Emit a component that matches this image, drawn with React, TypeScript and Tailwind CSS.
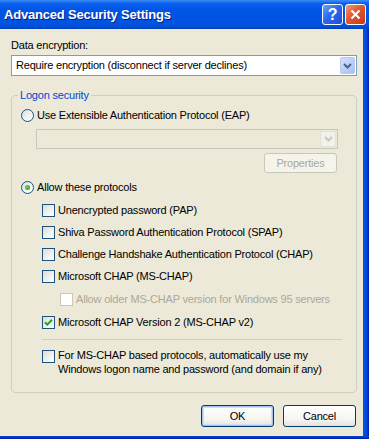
import React from 'react';

const CheckBox: React.FC<{ checked?: boolean; disabled?: boolean; className?: string }> = ({ checked = false, disabled = false, className = '' }) => (
  <span
    className={`w-[13px] h-[13px] shrink-0 border flex items-center justify-center ${
      disabled ? 'border-[#CAC8BB] bg-white' : 'border-[#1C5180] bg-[linear-gradient(135deg,#DCDCD7_0%,#F2F2EF_60%,#FFFFFF_100%)]'
    } ${className}`}
  >
    {checked && (
      <svg width="9" height="9" viewBox="0 0 9 9">
        <path d="M1 4.2 L3.3 6.6 L8 1.8" stroke="#21A121" strokeWidth="2" fill="none" />
      </svg>
    )}
  </span>
);

const Radio: React.FC<{ checked?: boolean }> = ({ checked = false }) => (
  <span className="w-[13px] h-[13px] shrink-0 rounded-full border border-[#1C5180] bg-[linear-gradient(135deg,#DCDCD7_0%,#F4F4F1_60%,#FFFFFF_100%)] flex items-center justify-center">
    {checked && <span className="w-[5px] h-[5px] rounded-full bg-[radial-gradient(circle_at_40%_40%,#63D563,#1E9A1E)]" />}
  </span>
);

const Chevron: React.FC<{ color: string }> = ({ color }) => (
  <svg width="9" height="6" viewBox="0 0 9 6">
    <path d="M1 1 L4.5 4.5 L8 1" stroke={color} strokeWidth="2" fill="none" />
  </svg>
);

const CheckRow: React.FC<{ label: string; checked?: boolean; className?: string }> = ({ label, checked, className = '' }) => (
  <div className={`flex items-center h-[13px] ml-[21px] gap-[3px] ${className}`}>
    <CheckBox checked={checked} />
    <span className="whitespace-nowrap">{label}</span>
  </div>
);

export default function App() {
  return (
    <div className="w-[369px] h-[439px] flex flex-col overflow-hidden bg-[#0054E3] font-['Liberation_Sans',Arial,sans-serif] text-[11px] leading-[13px] tracking-[-0.2px] text-black">
      {/* Title bar */}
      <div className="h-[29px] shrink-0 flex items-center pl-[4px] pr-[3px] bg-[linear-gradient(to_bottom,#3D8EF8_0%,#0A5FEE_12%,#0055E5_35%,#0054E3_70%,#0052DC_90%,#003FB8_100%)]">
        <span className="flex-1 text-white font-bold text-[13px] tracking-[-0.2px] [text-shadow:1px_1px_0_#0A1E80]">
          Advanced Security Settings
        </span>
        <div className="w-[21px] h-[21px] rounded-[3px] border border-white bg-[linear-gradient(135deg,#6FA2FF_0%,#2A68F0_45%,#1A4FD8_100%)] flex items-center justify-center text-white font-bold text-[16px] leading-none">
          ?
        </div>
        <div className="w-[21px] h-[21px] ml-[2px] rounded-[3px] border border-white bg-[linear-gradient(135deg,#F29A7C_0%,#E0572F_45%,#C63A16_100%)] flex items-center justify-center">
          <svg width="11" height="11" viewBox="0 0 11 11">
            <path d="M1.5 1.5 L9.5 9.5 M9.5 1.5 L1.5 9.5" stroke="white" strokeWidth="2" />
          </svg>
        </div>
      </div>

      <div className="flex-1 flex min-h-0">
        <div className="flex-1 bg-[#ECE9D8] pl-[11px] pr-[6px] pt-[10px]">
          <div>Data encryption:</div>
          <div className="mt-[3px] h-[21px] border border-[#7F9DB9] bg-white flex items-center pl-[4px] pr-px">
            <span className="flex-1 whitespace-nowrap">Require encryption (disconnect if server declines)</span>
            <div className="w-[15px] h-[17px] rounded-[2px] border border-[#B5C8F0] bg-[linear-gradient(135deg,#D4E0FC_0%,#BACDF8_60%,#A9BEF2_100%)] flex items-center justify-center">
              <Chevron color="#4D6185" />
            </div>
          </div>

          <fieldset className="mt-[13px] border border-[#D0D0BF] rounded-[4px] pl-[6px] pr-[6px] pt-[7px] pb-[16px]">
            <legend className="px-[2px] text-[#0046D5]">Logon security</legend>
            <div className="pl-[3px]">
              <div className="flex items-center h-[13px] gap-[3px]">
                <Radio />
                <span className="whitespace-nowrap">Use Extensible Authentication Protocol (EAP)</span>
              </div>

              <div className="mt-[7px] ml-[15px] w-[302px] h-[20px] border border-[#C9C7BA] bg-[#ECE9D8] flex items-center justify-end pr-px">
                <div className="w-[16px] h-[16px] rounded-[2px] border border-[#E3E1D6] bg-[#F2F1EA] flex items-center justify-center">
                  <Chevron color="#C9C7BA" />
                </div>
              </div>

              <div className="mt-[4px] ml-[243px] w-[73px] h-[20px] rounded-[3px] border border-[#C9C7BA] bg-[#F5F4EA] flex items-center justify-center text-[#ACA899]">
                Properties
              </div>

              <div className="mt-[8px] flex items-center h-[13px] gap-[3px]">
                <Radio checked />
                <span className="whitespace-nowrap">Allow these protocols</span>
              </div>

              <CheckRow className="mt-[10px]" label="Unencrypted password (PAP)" />
              <CheckRow className="mt-[9px]" label="Shiva Password Authentication Protocol (SPAP)" />
              <CheckRow className="mt-[9px]" label="Challenge Handshake Authentication Protocol (CHAP)" />
              <CheckRow className="mt-[9px]" label="Microsoft CHAP (MS-CHAP)" />

              <div className="mt-[10px] ml-[39px] flex items-center h-[13px] gap-[3px] text-[#ACA899]">
                <CheckBox disabled />
                <span className="whitespace-nowrap">Allow older MS-CHAP version for Windows 95 servers</span>
              </div>

              <CheckRow className="mt-[10px]" label="Microsoft CHAP Version 2 (MS-CHAP v2)" checked />

              <div className="mt-[10px] ml-[21px] w-[300px] h-px bg-[#D0D0BF]" />

              <div className="mt-[8px] ml-[21px] flex items-start gap-[3px] leading-[14px]">
                <CheckBox className="mt-[2px]" />
                <span>
                  For MS-CHAP based protocols, automatically use my
                  <br />
                  Windows logon name and password (and domain if any)
                </span>
              </div>
            </div>
          </fieldset>

          <div className="mt-[12px] flex justify-end gap-[9px] pr-px">
            <button className="w-[73px] h-[22px] rounded-[3px] border border-[#003C74] bg-[linear-gradient(to_bottom,#FFFFFF_0%,#F4F4F0_70%,#E3E2DA_100%)] shadow-[inset_0_0_0_1px_#A7C2F0,inset_0_0_0_2px_#CEDCF7] flex items-center justify-center">
              OK
            </button>
            <button className="w-[73px] h-[22px] rounded-[3px] border border-[#003C74] bg-[linear-gradient(to_bottom,#FFFFFF_0%,#F4F4F0_70%,#E3E2DA_100%)] flex items-center justify-center">
              Cancel
            </button>
          </div>
        </div>
        <div className="w-[6px] shrink-0 bg-[linear-gradient(to_right,#0055EA_0%,#0048D8_60%,#001EA0_100%)]" />
      </div>
      <div className="h-[3px] shrink-0 bg-[linear-gradient(to_bottom,#0048D8,#001EA0)]" />
    </div>
  );
}
